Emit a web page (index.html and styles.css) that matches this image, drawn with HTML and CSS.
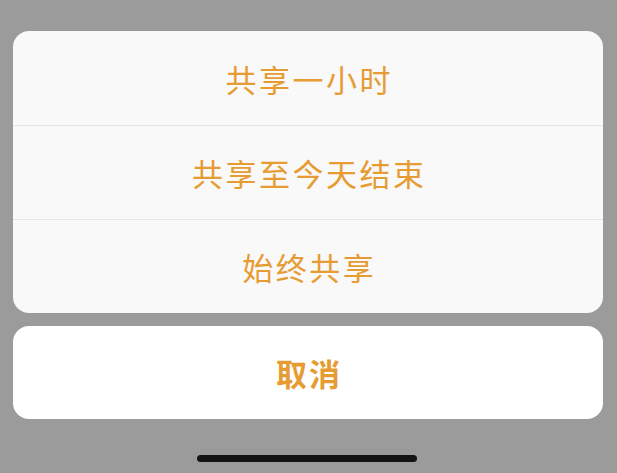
FILE: index.html
```html
<!DOCTYPE html>
<html lang="zh">
<head>
<meta charset="utf-8">
<link rel="stylesheet" href="styles.css">
</head>
<body>
<div class="sheet">
  <div class="group">
    <div class="item">共享一小时</div>
    <div class="item">共享至今天结束</div>
    <div class="item">始终共享</div>
  </div>
  <div class="cancel">取消</div>
  <div class="home"></div>
</div>
</body>
</html>
```
FILE: styles.css
```css
html, body {
  margin: 0;
  padding: 0;
  background: #9b9b9b;
  width: 617px;
  height: 473px;
  overflow: hidden;
}
.sheet {
  display: flex;
  flex-direction: column;
  padding: 31px 14px 0 13px;
  font-family: "Noto Sans CJK SC", "Noto Sans", sans-serif;
  color: #e69c32;
}
.group {
  background: #f9f9f9;
  border-radius: 16px;
  overflow: hidden;
}
.item {
  height: 94px;
  display: flex;
  align-items: center;
  justify-content: center;
  font-size: 31px;
  letter-spacing: 2.5px;
  text-indent: 2.5px;
  border-top: 1px solid #e6e6e6;
  box-sizing: border-box;
}
.item:first-child {
  border-top: none;
}
.cancel {
  margin-top: 13px;
  height: 93px;
  background: #ffffff;
  border-radius: 16px;
  display: flex;
  align-items: center;
  justify-content: center;
  font-size: 31px;
  font-weight: 700;
  letter-spacing: 2px;
  text-indent: 2px;
}
.home {
  align-self: center;
  margin-top: 36px;
  margin-left: -2px;
  width: 220px;
  height: 7px;
  border-radius: 4px;
  background: #141414;
}
```
